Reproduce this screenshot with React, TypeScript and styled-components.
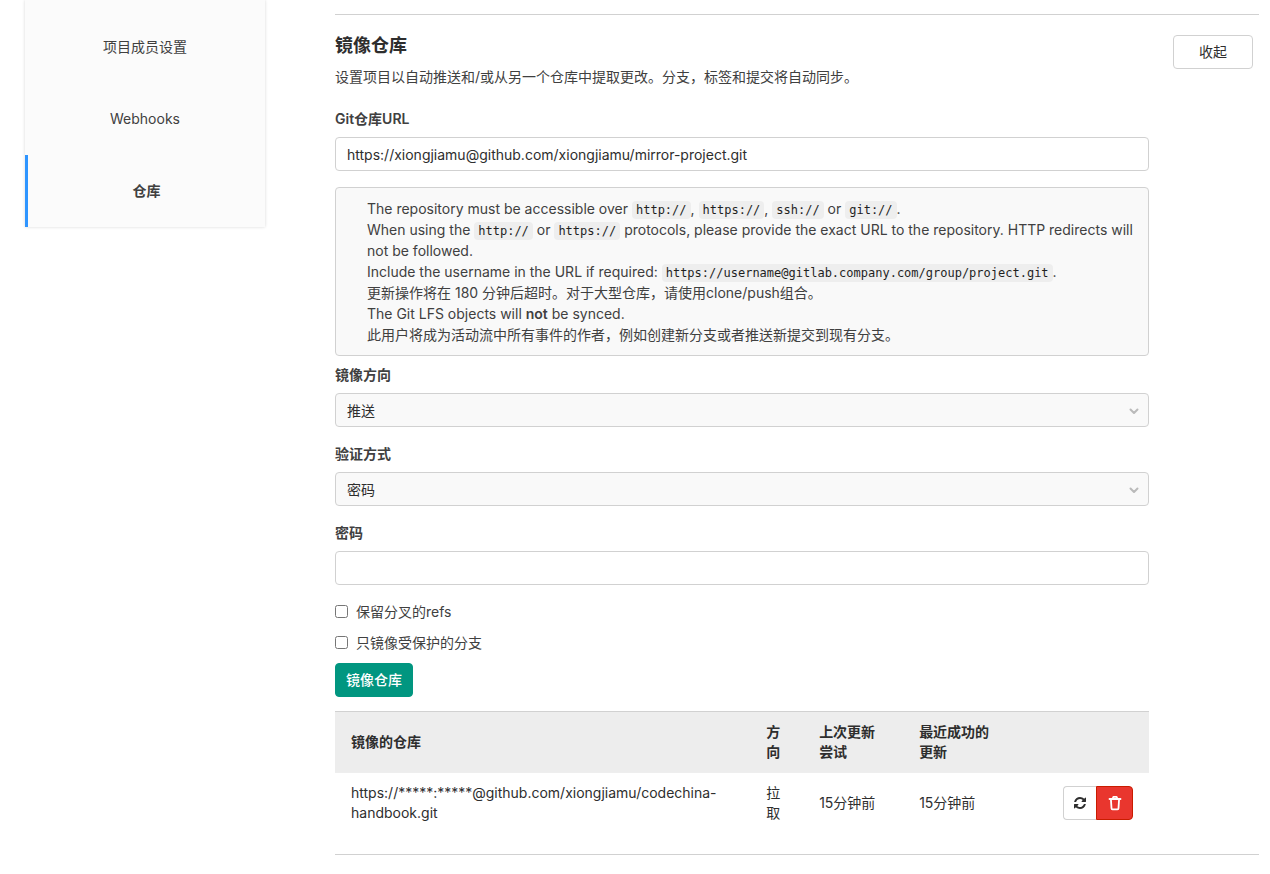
import React, { useState } from "react";
import styled, { createGlobalStyle } from "styled-components";

const sans = `Inter, "Noto Sans CJK SC", sans-serif`;
const mono = `"DejaVu Sans Mono", monospace`;

const GlobalStyle = createGlobalStyle`
  *, *::before, *::after { box-sizing: border-box; }
  body {
    margin: 0;
    background: #fff;
    color: #404040;
    font-family: ${sans};
    font-size: 14px;
    line-height: 21px;
  }
  button, input, select { font: inherit; }
`;

const Page = styled.div`
  display: flex;
  align-items: flex-start;
  gap: 70px;
  padding: 0 11px 20px 25px;
`;

const Sidebar = styled.nav`
  flex: 0 0 240px;
  padding-top: 11px;
  background: #fbfbfb;
  box-shadow: 0 0 3px rgba(0, 0, 0, 0.16);
`;

const SideLink = styled.a<{ $active?: boolean }>`
  display: flex;
  align-items: center;
  justify-content: center;
  height: 72px;
  border-left: ${(p) => (p.$active ? "3px solid #2f95ff" : "none")};
  color: #404040;
  font-weight: ${(p) => (p.$active ? 600 : 400)};
  line-height: 20px;
  text-decoration: none;
`;

const Main = styled.main`
  flex: 1;
  min-width: 0;
  padding-top: 14px;
`;

const Section = styled.section`
  border-top: 1px solid #d1d1d1;
  border-bottom: 1px solid #d1d1d1;
  padding: 20px 0 21px;
`;

const SectionHeader = styled.header`
  display: flex;
  align-items: flex-start;
  justify-content: space-between;
  padding-right: 6px;
  margin-bottom: 21px;
`;

const Title = styled.h4`
  margin: 0 0 10px;
  color: #2e2e2e;
  font-size: 18px;
  font-weight: 600;
  line-height: 21px;
`;

const Description = styled.p`
  margin: 0;
`;

const Button = styled.button<{ $primary?: boolean }>`
  height: 34px;
  padding: 0 ${(p) => (p.$primary ? "10px" : "25px")};
  border: 1px solid ${(p) => (p.$primary ? "#019680" : "#d1d1d1")};
  border-radius: 4px;
  background: ${(p) => (p.$primary ? "#019680" : "#fff")};
  color: ${(p) => (p.$primary ? "#fff" : "#2e2e2e")};
  font-weight: ${(p) => (p.$primary ? 500 : 400)};
  line-height: 20px;
  white-space: nowrap;
`;

const Body = styled.div`
  padding-right: 110px;
`;

const Field = styled.div`
  margin-bottom: 16px;
`;

const Label = styled.label`
  display: block;
  margin-bottom: 8px;
  font-weight: 600;
`;

const Input = styled.input`
  display: block;
  width: 100%;
  height: 34px;
  padding: 0 11px;
  border: 1px solid #d1d1d1;
  border-radius: 4px;
  background: #fff;
  color: #2e2e2e;
`;

const SelectBox = styled.div`
  position: relative;
`;

const Select = styled.select`
  display: block;
  width: 100%;
  height: 34px;
  padding: 0 30px 0 11px;
  border: 1px solid #d1d1d1;
  border-radius: 4px;
  background: #f9f9f9;
  color: #2e2e2e;
  appearance: none;
`;

const Chevron = styled.svg`
  position: absolute;
  top: 14px;
  right: 10px;
  pointer-events: none;
`;

const Well = styled.ul`
  margin: 0 0 8px;
  padding: 10px 10px 10px 31px;
  border: 1px solid #d1d1d1;
  border-radius: 4px;
  background: #f9f9f9;
  list-style: none;
`;

const Code = styled.code`
  padding: 2px 4px;
  border-radius: 4px;
  background: #eee;
  color: #1f1f1f;
  font-family: ${mono};
  font-size: 12px;
  line-height: 15px;
`;

const Strong = styled.strong`
  font-weight: 600;
`;

const Check = styled.label`
  display: flex;
  align-items: center;
  gap: 8px;
  margin-bottom: 10px;
`;

const Checkbox = styled.input`
  width: 13px;
  height: 13px;
  margin: 0;
`;

const Table = styled.table`
  width: 100%;
  margin-top: 14px;
  border-collapse: separate;
  border-spacing: 0;
  table-layout: fixed;
  line-height: 20px;
`;

const Th = styled.th`
  padding: 10px 16px;
  border-top: 1px solid #d1d1d1;
  border-bottom: 1px solid #eee;
  background: #ededed;
  color: #2e2e2e;
  font-weight: 600;
  text-align: left;
`;

const Td = styled.td`
  padding: 10px 16px;
  color: #2e2e2e;
`;

const Col = styled.col<{ $width?: string }>`
  width: ${(p) => p.$width ?? "auto"};
`;

const ButtonGroup = styled.div`
  display: flex;
  justify-content: flex-end;
`;

const IconButton = styled.button<{ $danger?: boolean }>`
  display: flex;
  align-items: center;
  justify-content: center;
  width: ${(p) => (p.$danger ? "37px" : "33px")};
  height: 34px;
  padding: 0;
  border: 1px solid ${(p) => (p.$danger ? "#c91c00" : "#d1d1d1")};
  border-right-width: ${(p) => (p.$danger ? "1px" : "0")};
  border-radius: ${(p) => (p.$danger ? "0 4px 4px 0" : "4px 0 0 4px")};
  background: ${(p) => (p.$danger ? "#e9362e" : "#fff")};
  color: ${(p) => (p.$danger ? "#fff" : "#2e2e2e")};
`;

const ChevronIcon = () => (
  <Chevron width="10" height="8" viewBox="0 0 10 8" aria-hidden="true">
    <path d="M1.5 2.500 5 6 8.500 2.500" fill="none" stroke="#bababa" strokeWidth="2" strokeLinecap="round" strokeLinejoin="round" />
  </Chevron>
);

const RefreshIcon = () => (
  <svg width="12" height="12" viewBox="0 0 1536 1536" fill="currentColor" aria-hidden="true">
    <path d="M1511 928q0 5-1 7-64 268-268 434.500t-478 166.500q-146 0-282.500-55t-243.500-157l-129 129q-19 19-45 19t-45-19-19-45v-448q0-26 19-45t45-19h448q26 0 45 19t19 45-19 45l-137 137q71 66 161 102t187 36q134 0 250-65t186-179q11-17 53-117 8-23 30-23h192q13 0 22.500 9.500t9.500 22.500zm25-800v448q0 26-19 45t-45 19h-448q-26 0-45-19t-19-45 19-45l138-138q-148-137-349-137-134 0-250 65t-186 179q-11 17-53 117-8 23-30 23h-199q-13 0-22.500-9.500t-9.500-22.500v-7q65-268 270-434.500t480-166.500q146 0 284 55.500t245 156.500l130-129q19-19 45-19t45 19 19 45z" />
  </svg>
);

const TrashIcon = () => (
  <svg width="16" height="16" viewBox="0 0 16 16" fill="none" stroke="currentColor" aria-hidden="true">
    <path d="M2.500 4h11" strokeWidth="1.800" strokeLinecap="round" />
    <path d="M5.700 3.500 6.400 1.900h3.200l.7 1.600" strokeWidth="1.800" strokeLinejoin="round" />
    <path d="M3.900 4l.6 9.300c0 .6.400 1 1 1h5c.6 0 1-.4 1-1L12.100 4" strokeWidth="1.800" />
  </svg>
);

const sideItems = [
  { label: "项目成员设置" },
  { label: "Webhooks" },
  { label: "仓库", active: true },
];

export default function App() {
  const [url, setUrl] = useState("https://xiongjiamu@github.com/xiongjiamu/mirror-project.git");

  return (
    <>
      <GlobalStyle />
      <Page lang="zh-CN">
        <Sidebar>
          {sideItems.map((item) => (
            <SideLink key={item.label} href="#" $active={item.active}>
              {item.label}
            </SideLink>
          ))}
        </Sidebar>
        <Main>
          <Section>
            <SectionHeader>
              <div>
                <Title>镜像仓库</Title>
                <Description>设置项目以自动推送和/或从另一个仓库中提取更改。分支，标签和提交将自动同步。</Description>
              </div>
              <Button type="button">收起</Button>
            </SectionHeader>
            <Body>
              <form>
                <Field>
                  <Label htmlFor="url">Git仓库URL</Label>
                  <Input id="url" type="text" value={url} onChange={(e) => setUrl(e.target.value)} />
                </Field>
                <Well>
                  <li>
                    The repository must be accessible over <Code>http://</Code>, <Code>https://</Code>, <Code>ssh://</Code> or <Code>git://</Code>.
                  </li>
                  <li>
                    When using the <Code>http://</Code> or <Code>https://</Code> protocols, please provide the exact URL to the repository. HTTP redirects will not be followed.
                  </li>
                  <li>
                    Include the username in the URL if required: <Code>https://username@gitlab.company.com/group/project.git</Code>.
                  </li>
                  <li>更新操作将在 180 分钟后超时。对于大型仓库，请使用clone/push组合。</li>
                  <li>
                    The Git LFS objects will <Strong>not</Strong> be synced.
                  </li>
                  <li>此用户将成为活动流中所有事件的作者，例如创建新分支或者推送新提交到现有分支。</li>
                </Well>
                <Field>
                  <Label htmlFor="direction">镜像方向</Label>
                  <SelectBox>
                    <Select id="direction">
                      <option>推送</option>
                    </Select>
                    <ChevronIcon />
                  </SelectBox>
                </Field>
                <Field>
                  <Label htmlFor="auth">验证方式</Label>
                  <SelectBox>
                    <Select id="auth">
                      <option>密码</option>
                    </Select>
                    <ChevronIcon />
                  </SelectBox>
                </Field>
                <Field>
                  <Label htmlFor="password">密码</Label>
                  <Input id="password" type="password" />
                </Field>
                <Check>
                  <Checkbox type="checkbox" />
                  保留分叉的refs
                </Check>
                <Check>
                  <Checkbox type="checkbox" />
                  只镜像受保护的分支
                </Check>
                <Button type="button" $primary>镜像仓库</Button>
              </form>
              <Table>
                <colgroup>
                  <Col $width="51%" />
                  <Col $width="53px" />
                  <Col $width="100px" />
                  <Col $width="112px" />
                  <Col />
                </colgroup>
                <thead>
                  <tr>
                    <Th>镜像的仓库</Th>
                    <Th>方向</Th>
                    <Th>上次更新尝试</Th>
                    <Th>最近成功的更新</Th>
                    <Th />
                  </tr>
                </thead>
                <tbody>
                  <tr>
                    <Td>https://*****:*****@github.com/xiongjiamu/codechina-handbook.git</Td>
                    <Td>拉取</Td>
                    <Td>15分钟前</Td>
                    <Td>15分钟前</Td>
                    <Td>
                      <ButtonGroup>
                        <IconButton type="button" aria-label="立即更新">
                          <RefreshIcon />
                        </IconButton>
                        <IconButton type="button" aria-label="删除" $danger>
                          <TrashIcon />
                        </IconButton>
                      </ButtonGroup>
                    </Td>
                  </tr>
                </tbody>
              </Table>
            </Body>
          </Section>
        </Main>
      </Page>
    </>
  );
}
